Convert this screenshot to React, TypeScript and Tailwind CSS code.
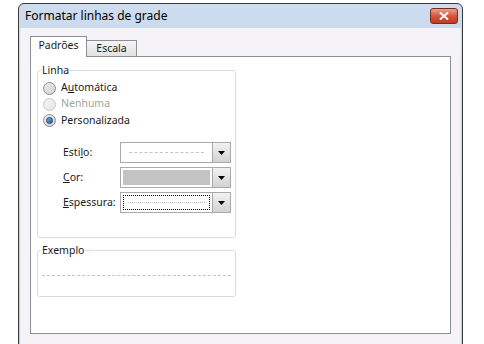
import React from 'react';

function Radio({ checked, disabled }: { checked?: boolean; disabled?: boolean }) {
  return (
    <span
      className={`flex h-[13px] w-[13px] items-center justify-center rounded-full border ${
        disabled
          ? 'border-[#c8c8c8] bg-gradient-to-br from-[#f4f4f4] to-[#e6e6e6]'
          : 'border-[#8c8c8c] bg-gradient-to-br from-[#eeeeee] to-[#cfcfcf]'
      }`}
    >
      {checked && (
        <span className="h-[7px] w-[7px] rounded-full border border-[#1b4a73] bg-gradient-to-br from-[#6fb4e8] to-[#1f5f96]" />
      )}
    </span>
  );
}

function Arrow() {
  return (
    <span className="flex h-full w-[18px] items-center justify-center border-l border-[#a8a8a8] bg-gradient-to-b from-[#f2f2f2] to-[#d3d3d3]">
      <svg width="7" height="4" viewBox="0 0 7 4">
        <path d="M0 0h7L3.5 4z" fill="#000" />
      </svg>
    </span>
  );
}

function Combo({ kind }: { kind: 'estilo' | 'cor' | 'espessura' }) {
  return (
    <div className="flex h-[21px] w-[111px] border border-[#a9a9a9] bg-white">
      <div className="flex flex-1 items-center p-[2px]">
        {kind === 'estilo' && (
          <div className="mx-[6px] w-full border-t border-dashed border-[#c4c4c4]" />
        )}
        {kind === 'cor' && <div className="h-full w-full bg-[#c3c3c3]" />}
        {kind === 'espessura' && (
          <div className="flex h-full w-full items-center border border-dotted border-black px-[4px]">
            <div className="w-full border-t border-dotted border-[#b8b8b8]" />
          </div>
        )}
      </div>
      <Arrow />
    </div>
  );
}

export default function App() {
  return (
    <div className="h-[344px] w-[484px] overflow-hidden bg-white font-['Noto_Sans',sans-serif] text-[10.5px] text-[#1a1a1a]">
      <div className="ml-[18px] mt-[3px] h-[360px] w-[445px] overflow-hidden rounded-t-[6px] border border-[#3a3a3a] bg-gradient-to-b from-[#cddcee] to-[#bccfe7]">
        {/* title bar */}
        <div className="flex h-[24px] items-center justify-between pl-[6px] pr-[4px]">
          <span className="text-[12px] leading-none text-black">Formatar linhas de grade</span>
          <span className="flex h-[16px] w-[28px] items-center justify-center rounded-[3px] border border-[#7a2a1c] bg-gradient-to-b from-[#e9a08c] via-[#d5553b] to-[#c33a22]">
            <svg width="10" height="8" viewBox="0 0 10 8">
              <path d="M1 0.5l8 7M9 0.5l-8 7" stroke="#fff" strokeWidth="2" />
            </svg>
          </span>
        </div>
        {/* body */}
        <div className="mx-[1px] h-full border-x border-[#e8eef6] bg-[#f6f3f8] pl-[9px] pr-[11px] pt-[8px]">
          {/* tabs */}
          <div className="flex items-end">
            <div className="relative z-10 -mb-px flex h-[21px] w-[57px] items-center justify-center border border-b-0 border-[#8c8e94] bg-white pb-[2px]">
              Padrões
            </div>
            <div className="flex h-[16px] w-[50px] items-center justify-center border border-b-0 border-l-0 border-[#8c8e94] bg-gradient-to-b from-[#f4f4f4] to-[#e2e2e2]">
              Escala
            </div>
          </div>
          {/* panel */}
          <div className="h-[278px] w-[421px] border border-[#8c8e94] bg-white pl-[6px] pt-[5px]">
            <fieldset className="h-[176px] w-[199px] rounded-[3px] border border-[#d5dde3] px-[3px]">
              <legend className="px-[1px] leading-[16px]">Linha</legend>
              <div className="pl-[2px] pt-[2px]">
                <div className="flex h-[16px] items-center gap-[5px]">
                  <Radio />
                  <span>
                    A<u>u</u>tomática
                  </span>
                </div>
                <div className="flex h-[16px] items-center gap-[5px] text-[#a3a3a3]">
                  <Radio disabled />
                  <span>Nenhuma</span>
                </div>
                <div className="flex h-[17px] items-center gap-[5px]">
                  <Radio checked />
                  <span>Personalizada</span>
                </div>
                <div className="mt-[13px] flex flex-col gap-[4px] pl-[20px]">
                  <div className="flex items-center">
                    <span className="w-[57px]">
                      Esti<u>l</u>o:
                    </span>
                    <Combo kind="estilo" />
                  </div>
                  <div className="flex items-center">
                    <span className="w-[57px]">
                      <u>C</u>or:
                    </span>
                    <Combo kind="cor" />
                  </div>
                  <div className="flex items-center">
                    <span className="w-[57px]">
                      <u>E</u>spessura:
                    </span>
                    <Combo kind="espessura" />
                  </div>
                </div>
              </div>
            </fieldset>
            <fieldset className="mt-[4px] h-[55px] w-[199px] rounded-[3px] border border-[#d5dde3] px-[3px]">
              <legend className="px-[1px] leading-[16px]">Exemplo</legend>
              <div className="mx-[1px] mt-[17px] border-t border-dashed border-[#c4c4c4]" />
            </fieldset>
          </div>
        </div>
      </div>
    </div>
  );
}
